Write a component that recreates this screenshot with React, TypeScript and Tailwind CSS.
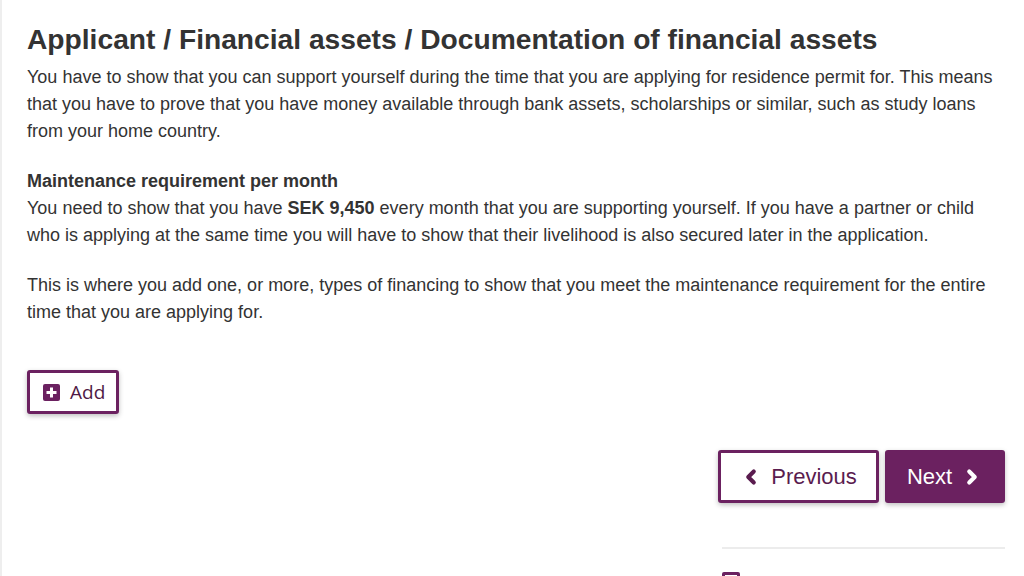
import { ChevronLeft, ChevronRight } from 'lucide-react';

const PlusSquare = () => (
  <svg width="17" height="17" viewBox="0 0 17 17" aria-hidden="true">
    <rect x="0" y="0" width="17" height="17" rx="2" fill="#6b2160" />
    <rect x="7" y="3.5" width="3" height="10" fill="#fff" />
    <rect x="3.5" y="7" width="10" height="3" fill="#fff" />
  </svg>
);

const App = () => {
  return (
    <div
      className="relative w-[1024px] h-[576px] overflow-hidden bg-white text-[#333] border-l-2 border-[#eeeeee]"
      style={{ fontFamily: '"Liberation Sans", Arial, sans-serif' }}
    >
      <div className="pl-[25px] pr-[14px] pt-[22px]">
        <h1 className="text-[28.2px] leading-[34px] font-bold text-[#333] mb-[8px]">
          Applicant / Financial assets / Documentation of financial assets
        </h1>

        <p className="text-[18px] leading-[27px] mb-[23px]">
          You have to show that you can support yourself during the time that you are applying for residence permit for. This means
          that you have to prove that you have money available through bank assets, scholarships or similar, such as study loans
          from your home country.
        </p>

        <p className="text-[18px] leading-[27px] mb-[23px]">
          <span className="font-bold">Maintenance requirement per month</span>
          <br />
          You need to show that you have <span className="font-bold">SEK 9,450</span> every month that you are supporting yourself. If you have a partner or child
          who is applying at the same time you will have to show that their livelihood is also secured later in the application.
        </p>

        <p className="text-[18px] leading-[27px]">
          This is where you add one, or more, types of financing to show that you meet the maintenance requirement for the entire
          time that you are applying for.
        </p>

        <div className="mt-[44px]">
          <button
            className="flex items-center gap-[10px] h-[44px] w-[92px] pl-[13px] border-[3px] border-[#6b2160] rounded-[3px] bg-white shadow-[0_2px_5px_rgba(0,0,0,0.25)] text-[19px] text-[#4f1a45]"
            style={{ fontFamily: '"Open Sans", sans-serif' }}
          >
            <PlusSquare />
            <span>Add</span>
          </button>
        </div>

        <div className="flex justify-end gap-[6px] mt-[36px] pr-[5px]">
          <button className="flex items-center justify-center gap-[9px] h-[53px] w-[161px] border-[3px] border-[#6b2160] rounded-[3px] bg-white shadow-[0_2px_5px_rgba(0,0,0,0.25)] text-[22px] text-[#5a1c4f]">
            <ChevronLeft size={22} strokeWidth={4.5} />
            <span>Previous</span>
          </button>
          <button className="flex items-center justify-center gap-[9px] h-[53px] w-[120px] rounded-[3px] bg-[#6b2160] shadow-[0_2px_5px_rgba(0,0,0,0.25)] text-[22px] text-white">
            <span>Next</span>
            <ChevronRight size={22} strokeWidth={4.5} />
          </button>
        </div>

        <div className="flex justify-end mt-[44px] pr-[5px]">
          <div className="w-[283px]">
            <div className="h-[2px] bg-[#ececec]" />
            <div className="mt-[23px] w-[18px] h-[18px] border-[3px] border-[#6b2160] rounded-[2px]" />
          </div>
        </div>
      </div>
    </div>
  );
};

export default App;
